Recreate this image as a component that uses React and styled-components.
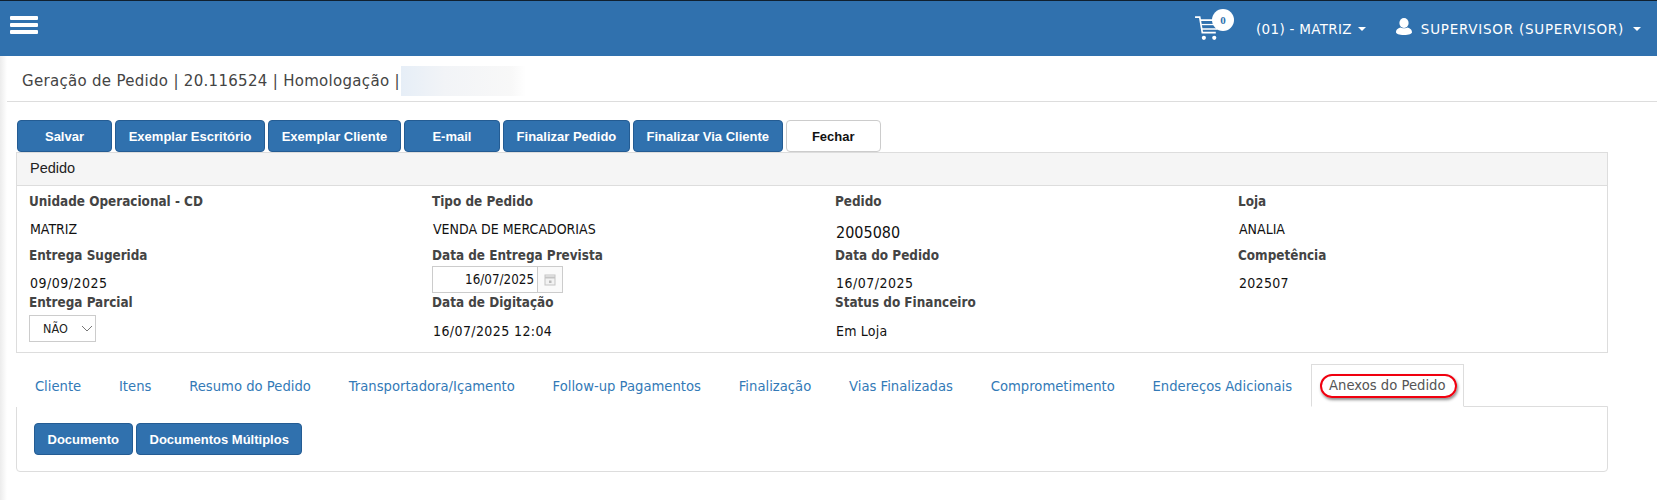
import React from "react";
import styled, { createGlobalStyle } from "styled-components";

const Global = createGlobalStyle`
  html, body { margin: 0; padding: 0; background: #fff; }
  body { font-family: "DejaVu Sans", Verdana, sans-serif; overflow: hidden; }
  * { box-sizing: border-box; }
`;

const Page = styled.div`
  width: 1657px;
  height: 500px;
  background: #fff;
  position: relative;
  overflow: hidden;
  &::after {
    content: "";
    position: absolute;
    left: 0;
    top: 56px;
    bottom: 0;
    width: 7px;
    background: linear-gradient(to right, #ececec, #ffffff);
  }
`;

const TopBar = styled.header`
  height: 56px;
  background: #3071ae;
  border-top: 1px solid #10202f;
  display: flex;
  align-items: center;
  padding: 0 16px 0 10px;
  color: #fff;
`;

const Burger = styled.div`
  width: 28px;
  display: flex;
  flex-direction: column;
  gap: 3px;
  margin-top: -7px;
  filter: blur(0.5px);
  span { height: 4px; background: #fff; border-radius: 1px; }
`;

const Right = styled.div`
  margin-left: auto;
  display: flex;
  align-items: center;
`;

const Cart = styled.div`
  position: relative;
  width: 25px;
  height: 27px;
  margin-right: 36px;
  margin-top: -1px;
  svg { display: block; }
`;

const Badge = styled.span`
  position: absolute;
  left: 17px;
  top: -6px;
  width: 22px;
  height: 22px;
  border-radius: 50%;
  background: #fff;
  color: #3071ae;
  font: bold 11px "Liberation Serif", serif;
  display: flex;
  align-items: center;
  justify-content: center;
`;

const NavItem = styled.div`
  display: flex;
  align-items: center;
  font-size: 13.5px;
  letter-spacing: ${(p) => p.$ls || 0}px;
  margin-left: ${(p) => p.$ml || 0}px;
`;

const NavIcon = styled.span`
  display: flex;
  margin: -4px 8px 0 0;
`;

const Caret = styled.i`
  display: inline-block;
  width: 0;
  height: 0;
  margin-left: ${(p) => p.$gap}px;
  border-top: 4px solid #fff;
  border-left: 4px solid transparent;
  border-right: 4px solid transparent;
`;

const TitleBar = styled.div`
  height: 46px;
  border-bottom: 1px solid #ddd;
  padding: 5px 0 0 22px;
  display: flex;
  align-items: center;
  color: #444;
  font-size: 15px;
  letter-spacing: 0.3px;
`;

const Blur = styled.div`
  width: 125px;
  height: 30px;
  margin-left: 1px;
  background: linear-gradient(to right, #e6eef7, #f2f4f7 35%, #f8f8f8 88%, #ffffff);
`;

const Main = styled.main`
  padding: 18px 49px 0 16px;
`;

const Toolbar = styled.div`
  display: flex;
  gap: 3.2px;
  margin-left: 1px;
`;

const Btn = styled.button`
  height: 32px;
  min-width: ${(p) => p.$min || 0}px;
  padding: 0 12.5px;
  border-radius: 4px;
  border: 1px solid ${(p) => (p.$light ? "#ccc" : "#245c93")};
  background: ${(p) => (p.$light ? "#fff" : "#3071ae")};
  color: ${(p) => (p.$light ? "#111" : "#fff")};
  font: bold 13px "Liberation Sans", Arial, sans-serif;
`;

const Panel = styled.section`
  border: 1px solid #ddd;
`;

const PanelHead = styled.div`
  height: 33px;
  background: #f5f5f5;
  border-bottom: 1px solid #ddd;
  padding: 0 0 2px 13px;
  display: flex;
  align-items: center;
  font: 14.5px "Liberation Sans", Arial, sans-serif;
  color: #222;
`;

const PanelBody = styled.div`
  display: grid;
  grid-template-columns: repeat(4, 403px);
  padding: 0 0 0 12px;
  height: 166px;
  align-content: start;
`;

const Cell = styled.div`
  height: ${(p) => p.$h}px;
  display: flex;
  flex-direction: column;
`;

const Label = styled.div`
  font: bold 13.4px "DejaVu Sans Condensed", "DejaVu Sans", sans-serif;
  color: #444;
  height: 17px;
  line-height: 17px;
  margin-top: ${(p) => p.$mt || 0}px;
`;

const Value = styled.div`
  font: ${(p) => (p.$big ? "16px" : "14px")} "DejaVu Sans Condensed", "DejaVu Sans", sans-serif;
  color: #111;
  margin-top: ${(p) => p.$mt || 11}px;
  line-height: 17px;
  padding-left: 1px;
  letter-spacing: ${(p) => p.$ls || 0}px;
`;

const DateGroup = styled.div`
  display: flex;
  width: 131px;
  height: 27px;
  margin-top: 2px;
  border: 1px solid #ccc;
`;

const DateInput = styled.div`
  flex: 1;
  text-align: right;
  padding-right: 3px;
  font: 13.3px "DejaVu Sans Condensed", "DejaVu Sans", sans-serif;
  line-height: 25px;
  color: #111;
`;

const DateAddon = styled.div`
  width: 25px;
  border-left: 1px solid #ccc;
  display: flex;
  align-items: center;
  justify-content: center;
  background: #fafafa;
`;

const SelectBox = styled.div`
  width: 67px;
  height: 27px;
  margin-top: 4px;
  border: 1px solid #ccc;
  display: flex;
  align-items: center;
  padding-left: 13px;
  font: 12.5px "DejaVu Sans Condensed", "DejaVu Sans", sans-serif;
  color: #222;
  svg { margin-left: 13px; }
`;

const Tabs = styled.nav`
  display: flex;
  align-items: flex-end;
  margin-top: 11px;
  height: 43px;
  position: relative;
  z-index: 1;
`;

const Tab = styled.div`
  height: ${(p) => (p.$active ? 43 : 42)}px;
  padding: 0 ${(p) => (p.$active ? 17 : 18.9)}px;
  display: flex;
  align-items: center;
  font-size: 13.2px;
  color: ${(p) => (p.$active ? "#555" : "#337ab7")};
  background: #fff;
  ${(p) => p.$active && `border: 1px solid #ddd; border-bottom: 1px solid #fff;`}
`;

const Ring = styled.span`
  position: relative;
  &::before {
    content: "";
    position: absolute;
    left: -9px;
    right: -11px;
    top: -4px;
    bottom: -5px;
    border: 2px solid #f0000f;
    border-radius: 12px;
    box-shadow: 1px 2px 3px rgba(0, 0, 0, 0.45);
  }
`;

const TabContent = styled.div`
  border: 1px solid #ddd;
  margin-top: -1px;
  height: 66px;
  border-radius: 0 0 4px 4px;
  padding: 16px 17px;
  display: flex;
  gap: 3.5px;
`;

const CartIcon = () => (
  <svg width="25" height="27" viewBox="0 0 24 26" fill="none" stroke="#fff" strokeWidth="1.6">
    <path d="M0 2h4.500l2.500 15h13" />
    <path d="M5 5h18l-2 8.500H6.500" />
    <path d="M6 9.200h16" strokeWidth="1.2" />
    <circle cx="8.500" cy="22" r="2" fill="#fff" stroke="none" />
    <circle cx="18.500" cy="22" r="2" fill="#fff" stroke="none" />
  </svg>
);

const UserIcon = () => (
  <svg width="18" height="17" viewBox="0 0 16 17" fill="#fff">
    <ellipse cx="8" cy="5" rx="4.600" ry="5" />
    <path d="M0 14.200c0-3 2.600-4.400 4.600-4.800 1 1 5.800 1 6.800 0 2 .4 4.600 1.800 4.600 4.800 0 1.600-3 2.800-8 2.800s-8-1.200-8-2.800z" />
  </svg>
);

const CalIcon = () => (
  <svg width="12" height="13" viewBox="0 0 12 13" fill="none" stroke="#c4c4c4">
    <rect x="1" y="2" width="10" height="10" fill="#f2f2f2" />
    <path d="M1 4.500h10" strokeWidth="2" />
    <path d="M5 7.500h2.500v2.500H5z" fill="#bbb" stroke="none" />
  </svg>
);

const Chevron = () => (
  <svg width="12" height="7" viewBox="0 0 12 7" fill="none" stroke="#777" strokeWidth="1">
    <path d="M1 1l5 5 5-5" />
  </svg>
);

const tabs = [
  "Cliente",
  "Itens",
  "Resumo do Pedido",
  "Transportadora/Içamento",
  "Follow-up Pagamentos",
  "Finalização",
  "Vias Finalizadas",
  "Comprometimento",
  "Endereços Adicionais",
];

const actions = [
  ["Salvar", 95],
  ["Exemplar Escritório", 0],
  ["Exemplar Cliente", 0],
  ["E-mail", 96],
  ["Finalizar Pedido", 0],
  ["Finalizar Via Cliente", 0],
];

export default function App() {
  return (
    <Page>
      <Global />
      <TopBar>
        <Burger>
          <span />
          <span />
          <span />
        </Burger>
        <Right>
          <Cart>
            <CartIcon />
            <Badge>0</Badge>
          </Cart>
          <NavItem $ls={0.3}>
            (01) - MATRIZ
            <Caret $gap={6} />
          </NavItem>
          <NavItem $ml={29} $ls={0.75}>
            <NavIcon>
              <UserIcon />
            </NavIcon>
            SUPERVISOR (SUPERVISOR)
            <Caret $gap={9} />
          </NavItem>
        </Right>
      </TopBar>
      <TitleBar>
        Geração de Pedido | 20.116524 | Homologação |<Blur />
      </TitleBar>
      <Main>
        <Toolbar>
          {actions.map(([t, w]) => (
            <Btn key={t} $min={w}>
              {t}
            </Btn>
          ))}
          <Btn $light $min={95}>
            Fechar
          </Btn>
        </Toolbar>
        <Panel>
          <PanelHead>Pedido</PanelHead>
          <PanelBody>
            <Cell $h={61}>
              <Label $mt={7}>Unidade Operacional - CD</Label>
              <Value>MATRIZ</Value>
            </Cell>
            <Cell $h={61}>
              <Label $mt={7}>Tipo de Pedido</Label>
              <Value>VENDA DE MERCADORIAS</Value>
            </Cell>
            <Cell $h={61}>
              <Label $mt={7}>Pedido</Label>
              <Value $big $mt={14}>2005080</Value>
            </Cell>
            <Cell $h={61}>
              <Label $mt={7}>Loja</Label>
              <Value>ANALIA</Value>
            </Cell>
            <Cell $h={47}>
              <Label>Entrega Sugerida</Label>
              <Value $ls={0.5}>09/09/2025</Value>
            </Cell>
            <Cell $h={47}>
              <Label>Data de Entrega Prevista</Label>
              <DateGroup>
                <DateInput>16/07/2025</DateInput>
                <DateAddon>
                  <CalIcon />
                </DateAddon>
              </DateGroup>
            </Cell>
            <Cell $h={47}>
              <Label>Data do Pedido</Label>
              <Value $ls={0.5}>16/07/2025</Value>
            </Cell>
            <Cell $h={47}>
              <Label>Competência</Label>
              <Value $ls={0.3}>202507</Value>
            </Cell>
            <Cell $h={50}>
              <Label>Entrega Parcial</Label>
              <SelectBox>
                NÃO
                <Chevron />
              </SelectBox>
            </Cell>
            <Cell $h={50}>
              <Label>Data de Digitação</Label>
              <Value $ls={0.4} $mt={12}>16/07/2025 12:04</Value>
            </Cell>
            <Cell $h={50}>
              <Label>Status do Financeiro</Label>
              <Value $ls={0.2} $mt={12}>Em Loja</Value>
            </Cell>
            <Cell $h={50} />
          </PanelBody>
        </Panel>
        <Tabs>
          {tabs.map((t) => (
            <Tab key={t}>{t}</Tab>
          ))}
          <Tab $active>
            <Ring>Anexos do Pedido</Ring>
          </Tab>
        </Tabs>
        <TabContent>
          <Btn>Documento</Btn>
          <Btn>Documentos Múltiplos</Btn>
        </TabContent>
      </Main>
    </Page>
  );
}
